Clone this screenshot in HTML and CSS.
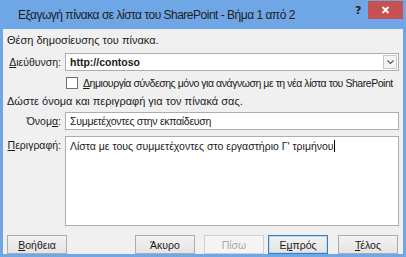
FILE: index.html
```html
<!DOCTYPE html>
<html lang="el">
<head>
<meta charset="utf-8">
<link rel="stylesheet" href="styles.css">
</head>
<body>
<div class="window">
  <div class="titlebar">
    <div class="title">Εξαγωγή πίνακα σε λίστα του SharePoint - Βήμα 1 από 2</div>
    <div class="help">?</div>
    <div class="close">
      <svg width="9" height="8" viewBox="0 0 9 8"><path d="M1.5 1L7.5 7M7.5 1L1.5 7" stroke="#fff" stroke-width="1.8"/></svg>
    </div>
  </div>
  <div class="body">
    <div class="section">Θέση δημοσίευσης του πίνακα.</div>
    <div class="row row-url">
      <label class="lbl"><u>Δ</u>ιεύθυνση:</label>
      <div class="combo">
        <span class="val">http://contoso</span>
        <span class="drop"><svg width="7" height="5" viewBox="0 0 7 5"><path d="M0.5 0.5L3.5 3.5L6.5 0.5" fill="none" stroke="#555" stroke-width="1.1"/></svg></span>
      </div>
    </div>
    <div class="row row-check">
      <span class="box"></span>
      <span class="checktext"><u>Δ</u>ημιουργία σύνδεσης μόνο για ανάγνωση με τη νέα λίστα του SharePoint</span>
    </div>
    <div class="section section2">Δώστε όνομα και περιγραφή για τον πίνακά σας.</div>
    <div class="row row-name">
      <label class="lbl">Όνομ<u>α</u>:</label>
      <div class="input"><span class="val name">Συμμετέχοντες στην εκπαίδευση</span></div>
    </div>
    <div class="row row-desc">
      <label class="lbl"><u>Π</u>εριγραφή:</label>
      <div class="input textarea"><span class="val">Λίστα με τους συμμετέχοντες στο εργαστήριο Γ' τριμήνου</span><span class="caret"></span></div>
    </div>
    <div class="buttons">
      <button class="btn"><u>Β</u>οήθεια</button>
      <div class="spacer"></div>
      <button class="btn">Άκυρο</button>
      <button class="btn disabled">Πίσω</button>
      <button class="btn default">Ε<u>μ</u>πρός</button>
      <button class="btn last"><u>Τ</u>έλος</button>
    </div>
  </div>
</div>
</body>
</html>
```
FILE: styles.css
```css
html, body { margin: 0; padding: 0; }
body { width: 406px; height: 257px; overflow: hidden; background: #6ea6e6; }
.window {
  width: 406px; height: 257px; box-sizing: border-box;
  background: #6ea6e6;
  padding: 0 3px 3px 3px;
  display: flex; flex-direction: column;
}
.titlebar {
  height: 29px; flex: none; position: relative; display: flex; align-items: center;
}
.title {
  font-family: "Liberation Sans", Arial, sans-serif;
  font-size: 12px; letter-spacing: -0.5px; color: #1e1e1e; padding-left: 15px; padding-top: 1px;
}
.help {
  position: absolute; left: 352px; top: 4px;
  font-family: "DejaVu Sans", sans-serif; font-weight: bold; font-size: 11px; color: #222;
}
.close {
  position: absolute; left: 365px; top: 1px; width: 35px; height: 18px;
  background: #c75050; display: flex; align-items: center; justify-content: center;
}
.body {
  flex: 1; background: #f0f0f0;
  font-family: "Liberation Sans", Arial, sans-serif; font-size: 10.5px; color: #1a1a1a;
  padding: 0 4px 0 4px; display: flex; flex-direction: column;
}
.section { margin-top: 3px; height: 16px; line-height: 16px; font-size: 11px; }
.section2 { margin-top: 4px; }
.row { display: flex; align-items: flex-start; }
.lbl { width: 54px; text-align: right; padding-right: 4px; flex: none; line-height: 18px; }
.row-url { margin-top: 5px; }
.combo, .input {
  flex: 1; height: 18px; box-sizing: border-box; background: #fff;
  border: 1px solid #abadb3; position: relative; padding-left: 4px; line-height: 16px;
}
.combo .val { font-weight: bold; }
.name { letter-spacing: -0.3px; }
.drop {
  position: absolute; right: 1px; top: 1px; width: 14px; height: 14px;
  border: 1px solid #c8c8c8; box-sizing: border-box; background: #f4f4f4;
  display: flex; align-items: center; justify-content: center;
}
.row-check { margin-top: 6px; padding-left: 59px; align-items: center; height: 12px; }
.checktext { letter-spacing: -0.45px; white-space: nowrap; }
.box {
  width: 12px; height: 12px; border: 1px solid #707070; background: #fff; flex: none;
  box-sizing: border-box; margin-right: 5px;
}
.row-name { margin-top: 3px; }
.row-desc { margin-top: 6px; }
.textarea { height: 90px; padding-top: 1px; }
.caret { display: inline-block; width: 1px; height: 12px; background: #000; vertical-align: -2px; }
.buttons { display: flex; margin-top: 9px; }
.spacer { flex: 1; }
.btn {
  width: 60px; height: 19px; box-sizing: border-box; margin-left: 9px;
  font-family: "Liberation Sans", Arial, sans-serif; font-size: 10.5px; color: #1a1a1a;
  background: linear-gradient(#f2f2f2, #e4e4e4); border: 1px solid #acacac; padding: 0;
}
.btn:first-child { margin-left: 0; }
.btn.disabled { color: #a8a8a8; border-color: #d0d0d0; background: #f4f4f4; }
.btn.default { border: 1px solid #3c7fb1; box-shadow: inset 0 0 0 1px #b5d9f7; margin-left: 4px; }
.btn.last { margin-left: 10px; margin-right: 1px; }
```
